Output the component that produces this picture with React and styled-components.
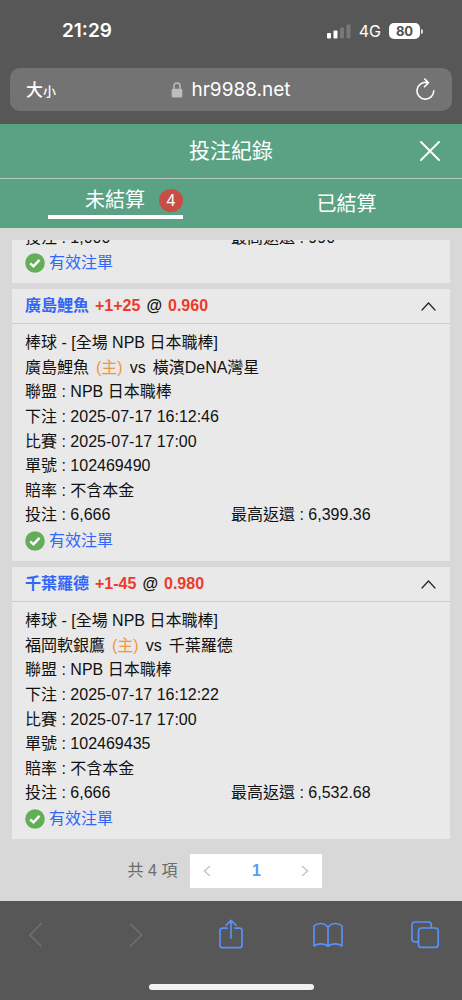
import React from 'react';
import styled, { createGlobalStyle } from 'styled-components';

const GlobalStyle = createGlobalStyle`
  * { box-sizing: border-box; }
  body {
    margin: 0;
    background: #575757;
    font-family: "Liberation Sans", "Noto Sans CJK TC", sans-serif;
    font-size: 16px;
    line-height: 24px;
    color: #111;
  }
  button {
    margin: 0;
    padding: 0;
    border: 0;
    background: none;
    font: inherit;
    color: inherit;
  }
  svg { display: block; flex: none; }
  p, h1, h2, ul { margin: 0; padding: 0; }
`;

const Screen = styled.div`
  display: flex;
  flex-direction: column;
  height: 100vh;
`;

const StatusBar = styled.div`
  display: flex;
  align-items: center;
  justify-content: space-between;
  height: 62px;
  padding: 0 39px 0 62px;
  color: #fff;
  font-family: Inter, sans-serif;
`;

const Clock = styled.time`
  font-size: 19px;
  font-weight: 600;
`;

const Signals = styled.div`
  display: flex;
  align-items: center;
  gap: 8px;
  font-size: 16px;
`;

const BatteryBox = styled.div`
  display: flex;
  align-items: center;
  gap: 1px;
`;

const BatteryLevel = styled.span`
  width: 31px;
  height: 16px;
  border-radius: 5px;
  background: #fff;
  color: #505050;
  font-size: 13px;
  font-weight: 700;
  line-height: 16px;
  text-align: center;
`;

const BatteryTip = styled.span`
  width: 2px;
  height: 5px;
  border-radius: 0 2px 2px 0;
  background: #ddd;
`;

const AddressBar = styled.div`
  display: grid;
  grid-template-columns: 1fr auto 1fr;
  align-items: center;
  height: 43px;
  margin: 6px 10px 13px;
  padding: 0 16px;
  border-radius: 10px;
  background: #737373;
  color: #fff;
`;

const TextSizeButton = styled.button`
  justify-self: start;
  font-family: "Noto Sans CJK TC", sans-serif;
  font-weight: 500;
  font-size: 17px;

  small { font-size: 13px; }
`;

const Address = styled.a`
  display: flex;
  align-items: center;
  gap: 8px;
  color: #fff;
  font-family: Inter, sans-serif;
  font-size: 19px;
  text-decoration: none;
`;

const ReloadButton = styled.button`
  justify-self: end;
`;

const TitleBar = styled.header`
  display: grid;
  grid-template-columns: 1fr auto 1fr;
  align-items: center;
  height: 55px;
  padding: 0 22px;
  border-bottom: 1px solid #b9cbc2;
  background: #5aa283;
  color: #fff;
`;

const Title = styled.h1`
  grid-column: 2;
  font-size: 21px;
  font-weight: 400;
`;

const CloseButton = styled.button`
  justify-self: end;
`;

const Tabs = styled.nav`
  display: grid;
  grid-template-columns: 1fr 1fr;
  height: 49px;
  background: #5aa283;
  color: #fff;
`;

const Tab = styled.button`
  display: flex;
  align-items: center;
  justify-content: center;
  gap: 14px;
  justify-self: center;
  height: ${({ $active }) => ($active ? '40px' : '49px')};
  min-width: 135px;
  padding: ${({ $active }) => ($active ? '6px 0 0 37px' : '0')};
  border-bottom: ${({ $active }) => ($active ? '4px solid #fff' : '0')};
  font-size: 20px;
`;

const CountBadge = styled.span`
  width: 24px;
  height: 23px;
  border-radius: 50%;
  background: #c94d42;
  font-size: 16px;
  line-height: 23px;
  text-align: center;
`;

const Content = styled.main`
  display: flex;
  flex: 1;
  flex-direction: column;
  min-height: 0;
  padding: 12px 12px 13px;
  background: #d8d8d8;
`;

const BetList = styled.div`
  display: flex;
  flex: 1;
  flex-direction: column;
  justify-content: flex-end;
  gap: 6px;
  min-height: 0;
  overflow: hidden;
`;

const Card = styled.article`
  flex: none;
  background: #e9e9e9;
`;

const CardHeader = styled.header`
  display: flex;
  align-items: center;
  justify-content: space-between;
  height: 35px;
  padding: 0 14px 0 13px;
  border-bottom: 1px solid #cdcdcd;
`;

const CardTitle = styled.h2`
  display: flex;
  gap: 6px;
  font-size: 16px;
  font-weight: 700;
`;

const Team = styled.span`
  color: #3366f6;
`;

const Odds = styled.span`
  color: #ee3a2c;
`;

const Home = styled.span`
  color: #f0963c;
`;

const CardBody = styled.div`
  display: flex;
  flex-direction: column;
  justify-content: space-between;
  min-height: ${({ $partial }) => ($partial ? '0' : '237px')};
  padding: 7px 13px;
`;

const Line = styled.p`
  line-height: 24px;
`;

const Matchup = styled(Line)`
  display: flex;
  gap: 7px;
`;

const AmountRow = styled.div`
  display: grid;
  grid-template-columns: 206px 1fr;
`;

const Status = styled.p`
  display: flex;
  align-items: center;
  gap: 4px;
  line-height: 26px;
  color: #3366f6;
`;

const Pagination = styled.nav`
  display: flex;
  align-items: center;
  justify-content: center;
  gap: 13px;
  margin-top: 15px;
  padding-right: 12px;
  color: #6a6b6e;
`;

const Pager = styled.div`
  display: grid;
  grid-template-columns: 34px 64px 34px;
  height: 34px;
  background: #fff;
`;

const PageButton = styled.button`
  display: flex;
  align-items: center;
  justify-content: center;
  color: ${({ $current }) => ($current ? '#579bf8' : '#bfc2cb')};
  font-weight: 700;
`;

const BottomBar = styled.footer`
  display: flex;
  flex-direction: column;
  align-items: center;
  justify-content: space-between;
  height: 99px;
  padding: 18px 21px 10px;
`;

const Toolbar = styled.div`
  display: flex;
  justify-content: space-between;
  width: 100%;
`;

const ToolButton = styled.button`
  width: 32px;
  height: 32px;
  color: ${({ disabled }) => (disabled ? '#707070' : '#5b90f6')};
`;

const HomeIndicator = styled.div`
  width: 165px;
  height: 6px;
  border-radius: 3px;
  background: #f1f1f1;
`;

const SignalIcon = () => (
  <svg width="24" height="15" viewBox="0 0 24 15" aria-hidden="true">
    <rect x="0" y="9" width="4" height="5.5" rx="1" fill="#fff" />
    <rect x="6.5" y="6.5" width="4" height="8" rx="1" fill="#fff" />
    <rect x="13" y="3.5" width="4" height="11" rx="1" fill="#787878" />
    <rect x="19.5" y="0.5" width="4" height="14" rx="1" fill="#787878" />
  </svg>
);

const LockIcon = () => (
  <svg width="12" height="16" viewBox="0 0 12 16" aria-hidden="true">
    <path d="M3 8V4.3C3 2.2 4.1 1 6 1s3 1.2 3 3.3V8" fill="none" stroke="#bcbcc1" strokeWidth="1.5" />
    <rect x="0.7" y="6.8" width="10.6" height="8.7" rx="1.5" fill="#bcbcc1" />
  </svg>
);

const ReloadIcon = () => (
  <svg width="20" height="24" viewBox="0 0 20 24" fill="none" stroke="#fff" strokeWidth="1.6" strokeLinecap="round" strokeLinejoin="round" aria-hidden="true">
    <path d="M11.3 4.6A8.400 8.400 0 1 0 17.800 12.800M8.700 1L12.500 4.800L8.500 8.800" />
  </svg>
);

const CloseIcon = () => (
  <svg width="20" height="20" viewBox="0 0 20 20" stroke="#fff" strokeWidth="1.9" strokeLinecap="round" aria-hidden="true">
    <path d="M1 1L19 19M19 1L1 19" />
  </svg>
);

const ChevronUpIcon = () => (
  <svg width="15" height="9" viewBox="0 0 15 9" fill="none" stroke="#222" strokeWidth="1.2" strokeLinecap="round" aria-hidden="true">
    <path d="M1 8L7.5 1L14 8" />
  </svg>
);

const CheckIcon = () => (
  <svg width="20" height="20" viewBox="0 0 20 20" aria-hidden="true">
    <circle cx="10" cy="10" r="9.8" fill="#65ae59" />
    <path d="M5.2 10.3L8.500 13.300L14.500 6.900" fill="none" stroke="#fff" strokeWidth="2.500" />
  </svg>
);

const PageArrow = ({ d }) => (
  <svg width="8" height="12" viewBox="0 0 8 12" fill="none" stroke="currentColor" strokeWidth="1.3" aria-hidden="true">
    <path d={d} />
  </svg>
);

const ToolIcon = ({ d }) => (
  <svg width="32" height="32" viewBox="0 0 32 32" fill="none" stroke="currentColor" strokeWidth="1.7" strokeLinecap="round" strokeLinejoin="round" aria-hidden="true">
    <path d={d} />
  </svg>
);

const tools = [
  { label: '上一頁', disabled: true, d: 'M20 5L8.8 16L20 27' },
  { label: '下一頁', disabled: true, d: 'M12.5 5L23.7 16L12.5 27' },
  { label: '分享', d: 'M12 9.2H7.5Q5 9.2 5 11.7V26.2Q5 28.7 7.5 28.7H24.5Q27 28.7 27 26.2V11.7Q27 9.2 24.5 9.2H20M16 19V1.3M11 6.3L16 1.3L21 6.3' },
  { label: '書籤', d: 'M16 8.3C14 5.6 11.5 4.5 8.5 4.5C5.5 4.5 3.4 5.5 2 6.8V27C4 25.6 6.3 24.9 8.8 24.9C11.8 24.9 14.3 25.7 16 27.4C17.7 25.7 20.2 24.9 23.2 24.9C25.7 24.9 28 25.6 30 27V6.8C28.6 5.5 26.5 4.5 23.5 4.5C20.5 4.5 18 5.6 16 8.3V27' },
  { label: '分頁', d: 'M9.5 22.9H6Q3 22.9 3 19.9V6Q3 3 6 3H19.3Q22.3 3 22.3 6V8.8M12.5 9H26.2Q29.2 9 29.2 12V25.4Q29.2 28.4 26.2 28.4H12.5Q9.5 28.4 9.5 25.4V12Q9.5 9 12.5 9Z' },
];

const bets = [
  {
    team: '廣島鯉魚', line: '+1+25', odds: '0.960',
    home: '廣島鯉魚', away: '橫濱DeNA灣星',
    placed: '2025-07-17 16:12:46', ticket: '102469490',
    stake: '6,666', payout: '6,399.36',
  },
  {
    team: '千葉羅德', line: '+1-45', odds: '0.980',
    home: '福岡軟銀鷹', away: '千葉羅德',
    placed: '2025-07-17 16:12:22', ticket: '102469435',
    stake: '6,666', payout: '6,532.68',
  },
];

const Amounts = ({ stake, payout }) => (
  <AmountRow>
    <Line>投注 : {stake}</Line>
    <Line>最高返還 : {payout}</Line>
  </AmountRow>
);

const ValidStatus = () => (
  <Status><CheckIcon />有效注單</Status>
);

const BetCard = ({ bet }) => (
  <Card>
    <CardHeader>
      <CardTitle>
        <Team>{bet.team}</Team>
        <Odds>{bet.line}</Odds>
        <span>@</span>
        <Odds>{bet.odds}</Odds>
      </CardTitle>
      <button type="button" aria-label="收合"><ChevronUpIcon /></button>
    </CardHeader>
    <CardBody>
      <Line>棒球 - [全場 NPB 日本職棒]</Line>
      <Matchup>
        <span>{bet.home}</span>
        <Home>(主)</Home>
        <span>vs</span>
        <span>{bet.away}</span>
      </Matchup>
      <Line>聯盟 : NPB 日本職棒</Line>
      <Line>下注 : {bet.placed}</Line>
      <Line>比賽 : 2025-07-17 17:00</Line>
      <Line>單號 : {bet.ticket}</Line>
      <Line>賠率 : 不含本金</Line>
      <Amounts stake={bet.stake} payout={bet.payout} />
      <ValidStatus />
    </CardBody>
  </Card>
);

export default function App() {
  return (
    <Screen>
      <GlobalStyle />
      <StatusBar>
        <Clock>21:29</Clock>
        <Signals>
          <SignalIcon />
          <span>4G</span>
          <BatteryBox>
            <BatteryLevel>80</BatteryLevel>
            <BatteryTip />
          </BatteryBox>
        </Signals>
      </StatusBar>
      <AddressBar>
        <TextSizeButton type="button">大<small>小</small></TextSizeButton>
        <Address href="#"><LockIcon />hr9988.net</Address>
        <ReloadButton type="button" aria-label="重新載入"><ReloadIcon /></ReloadButton>
      </AddressBar>

      <TitleBar>
        <Title>投注紀錄</Title>
        <CloseButton type="button" aria-label="關閉"><CloseIcon /></CloseButton>
      </TitleBar>
      <Tabs>
        <Tab type="button" $active>未結算<CountBadge>4</CountBadge></Tab>
        <Tab type="button">已結算</Tab>
      </Tabs>

      <Content>
        <BetList>
          <Card>
            <CardBody $partial>
              <Amounts stake="1,000" payout="990" />
              <ValidStatus />
            </CardBody>
          </Card>
          {bets.map((bet) => <BetCard key={bet.ticket} bet={bet} />)}
        </BetList>
        <Pagination aria-label="分頁">
          <span>共 4 項</span>
          <Pager>
            <PageButton type="button" aria-label="上一頁"><PageArrow d="M7 1L1.5 6L7 11" /></PageButton>
            <PageButton type="button" $current>1</PageButton>
            <PageButton type="button" aria-label="下一頁"><PageArrow d="M1 1L6.5 6L1 11" /></PageButton>
          </Pager>
        </Pagination>
      </Content>

      <BottomBar>
        <Toolbar>
          {tools.map((tool) => (
            <ToolButton key={tool.label} type="button" aria-label={tool.label} disabled={tool.disabled}>
              <ToolIcon d={tool.d} />
            </ToolButton>
          ))}
        </Toolbar>
        <HomeIndicator />
      </BottomBar>
    </Screen>
  );
}
